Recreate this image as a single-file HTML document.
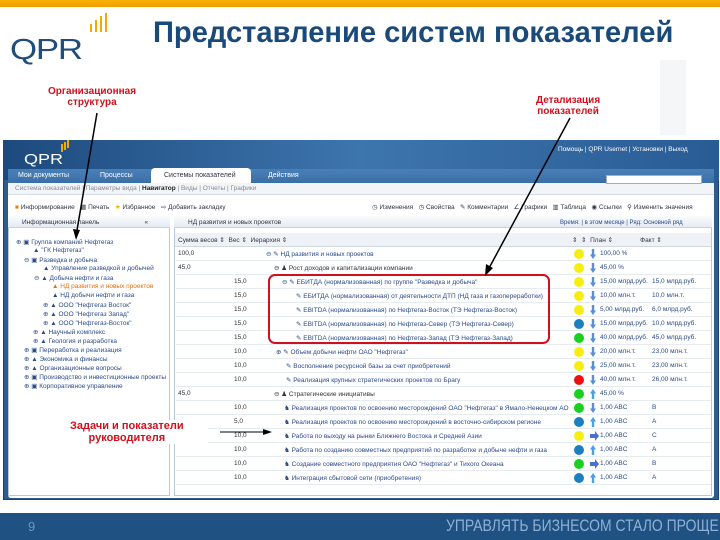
<!DOCTYPE html>
<html><head><meta charset="utf-8"><style>
*{margin:0;padding:0;box-sizing:border-box}
body{width:720px;height:540px;position:relative;overflow:hidden;background:#fff;font-family:"Liberation Sans","DejaVu Sans",sans-serif}
.a{position:absolute;white-space:nowrap}
.t{font-size:7px;color:#334}
.row{position:absolute;left:176px;width:535px;height:14px;border-bottom:1px solid #e6ebf0;font-size:6.5px;color:#2a4a8a}
.row span{position:absolute;top:3px;white-space:nowrap}
.c{position:absolute;top:2px;left:398px;width:10px;height:10px;border-radius:50%}
.ar{position:absolute;top:2px;left:414px;width:6px;height:10px;background:#5b8fd0;clip-path:polygon(30% 0,70% 0,70% 55%,100% 55%,50% 100%,0 55%,30% 55%)}
.tr{position:absolute;font-size:6.5px;color:#2a4a8a;white-space:nowrap}
</style></head><body>
<div class="a" style="left:0;top:0;width:720px;height:7px;background:linear-gradient(#f7b300,#f49a00)"></div>
<!-- logo -->
<div class="a" style="left:10px;top:34px;font-size:29px;color:#1f4e7a;letter-spacing:-1px;transform:scaleX(1.2);transform-origin:left">QPR</div>
<div class="a" style="left:90px;top:24px;width:2px;height:8px;background:#f2a900"></div>
<div class="a" style="left:95px;top:20px;width:2px;height:12px;background:#f2a900"></div>
<div class="a" style="left:100px;top:16px;width:2px;height:16px;background:#f2a900"></div>
<div class="a" style="left:105px;top:13px;width:2px;height:19px;background:#f2a900"></div>
<div class="a" style="left:153px;top:16px;font-size:30px;font-weight:bold;color:#1a4a7a;transform:scaleX(0.97);transform-origin:left">Представление систем показателей</div>
<div class="a" style="left:660px;top:60px;width:26px;height:75px;background:#f5f6f8"></div>
<div class="a" style="left:48px;top:86px;font-size:10px;font-weight:bold;color:#d0101c;text-align:center;line-height:11px">Организационная<br>структура</div>
<div class="a" style="left:536px;top:95px;font-size:10px;font-weight:bold;color:#d0101c;text-align:center;line-height:11px">Детализация<br>показателей</div>

<!-- app -->
<div class="a" style="left:3px;top:140px;width:716px;height:360px;background:#2d5d90;border:1px solid #1d4470"></div>
<div class="a" style="left:3px;top:140px;width:716px;height:40px;background:linear-gradient(90deg,#1d4a7e,#3d75ad 50%,#2a5c94)"></div>
<div class="a" style="left:24px;top:151px;font-size:15px;color:#fff;transform:scaleX(1.2);transform-origin:left">QPR</div>
<div class="a" style="left:61px;top:144px;width:2px;height:8px;background:#f2a900;box-shadow:3px -2px 0 #f2a900,6px -4px 0 #f2a900"></div>
<div class="a t" style="left:558px;top:146px;color:#fff;font-size:6.5px">Помощь | QPR Usernet | Установки | Выход</div>
<div class="a" style="left:8px;top:172px;width:706px;height:326px;background:#fff;border-radius:3px"></div>
<div class="a" style="left:8px;top:169px;width:706px;height:14px;background:linear-gradient(#4a80b8,#3a6ea6)"></div>
<div class="a t" style="left:18px;top:172px;color:#fff">Мои документы</div>
<div class="a t" style="left:100px;top:172px;color:#fff">Процессы</div>
<div class="a" style="left:151px;top:168px;width:100px;height:15px;background:#fff;border-radius:4px 4px 0 0"></div>
<div class="a t" style="left:164px;top:172px">Системы показателей</div>
<div class="a t" style="left:268px;top:172px;color:#fff">Действия</div>
<div class="a" style="left:8px;top:183px;width:706px;height:12px;background:#f2f5f8;border-bottom:1px solid #d5dde6"></div>
<div class="a t" style="left:15px;top:185px;color:#889;font-size:6.5px">Система показателей | Параметры вида | <b style="color:#222">Навигатор</b> | Виды | Отчеты | Графики</div>
<div class="a" style="left:606px;top:175px;width:96px;height:9px;background:#fff;border:1px solid #aab"></div>
<div class="a t" style="left:15px;top:203px;font-size:6.5px"><span style="color:#e08a1c">■</span> Информирование &nbsp; ▦ Печать &nbsp; <span style="color:#e8b800">★</span> Избранное &nbsp; ⇨ Добавить закладку</div>
<div class="a t" style="left:372px;top:203px;font-size:6.5px">◷ Изменения &nbsp; ◷ Свойства &nbsp; ✎ Комментарии &nbsp; ∠ Графики &nbsp; ▥ Таблица &nbsp; ◉ Ссылки &nbsp; ⚲ Изменить значения</div>
<!-- panels -->
<div class="a" style="left:8px;top:216px;width:162px;height:280px;border:1px solid #b8c8d8;background:#fff"></div>
<div class="a" style="left:8px;top:216px;width:162px;height:12px;background:linear-gradient(#fafcfe,#e4ebf3);border-bottom:1px solid #c5d1de"></div>
<div class="a t" style="left:22px;top:219px;font-size:6.5px">Информационная панель &nbsp; &nbsp; &nbsp; &nbsp; &nbsp; &nbsp; &nbsp; &nbsp; &nbsp; &nbsp; &nbsp; &nbsp; «</div>
<div class="a" style="left:174px;top:216px;width:538px;height:280px;border:1px solid #b8c8d8;background:#fff"></div>
<div class="a" style="left:174px;top:216px;width:538px;height:12px;background:linear-gradient(#fafcfe,#e4ebf3);border-bottom:1px solid #c5d1de"></div>
<div class="a t" style="left:188px;top:219px;font-size:6.5px">НД развития и новых проектов</div>
<div class="a t" style="left:560px;top:220px;font-size:6px;color:#2a4a8a">Время: | в этом месяце | Ряд: Основной ряд</div>
<div class="a" style="left:175px;top:233px;width:536px;height:14px;background:#eef2f6;border-bottom:1px solid #d0d8e0"></div>
<div class="a t" style="left:178px;top:236px;font-size:6.5px">Сумма весов ⇕ &nbsp;Вес ⇕ &nbsp;Иерархия ⇕</div>
<div class="a t" style="left:572px;top:236px;font-size:6.5px">⇕ &nbsp;⇕ &nbsp;План ⇕ &nbsp; &nbsp; &nbsp; &nbsp; &nbsp; &nbsp; &nbsp; Факт ⇕</div>
<!-- tree -->
<div class="tr" style="left:16px;top:238px">⊕ <b>▣</b> Группа компаний Нефтегаз</div>
<div class="tr" style="left:33px;top:247px">▲ "ГК Нефтегаз"</div>
<div class="tr" style="left:24px;top:256px">⊖ ▣ Разведка и добыча</div>
<div class="tr" style="left:43px;top:265px">▲ Управление разведкой и добычей</div>
<div class="tr" style="left:34px;top:274px">⊖ ▲ Добыча нефти и газа</div>
<div class="tr" style="left:52px;top:283px;color:#e07010">▲ НД развития и новых проектов</div>
<div class="tr" style="left:52px;top:292px">▲ НД добычи нефти и газа</div>
<div class="tr" style="left:43px;top:301px">⊕ ▲ ООО "Нефтегаз Восток"</div>
<div class="tr" style="left:43px;top:310px">⊕ ▲ ООО "Нефтегаз Запад"</div>
<div class="tr" style="left:43px;top:319px">⊕ ▲ ООО "Нефтегаз-Восток"</div>
<div class="tr" style="left:33px;top:328px">⊕ ▲ Научный комплекс</div>
<div class="tr" style="left:33px;top:337px">⊕ ▲ Геология и разработка</div>
<div class="tr" style="left:24px;top:346px">⊕ ▣ Переработка и реализация</div>
<div class="tr" style="left:24px;top:355px">⊕ ▲ Экономика и финансы</div>
<div class="tr" style="left:24px;top:364px">⊕ ▲ Организационные вопросы</div>
<div class="tr" style="left:24px;top:373px">⊕ ▣ Производство и инвестиционные проекты</div>
<div class="tr" style="left:24px;top:382px">⊕ ▣ Корпоративное управление</div>
<!-- rows -->
<div class="row" style="top:247px"><span style="left:2px;color:#333">100,0</span><span style="left:90px">⊖ ✎ НД развития и новых проектов</span><i class="c" style="background:#f5ee10"></i><i class="ar"></i><span style="left:424px">100,00 %</span></div>
<div class="row" style="top:261px"><span style="left:2px;color:#333">45,0</span><span style="left:98px;color:#333">⊖ <b>♟</b> Рост доходов и капитализации компании</span><i class="c" style="background:#f5ee10"></i><i class="ar"></i><span style="left:424px">45,00 %</span></div>
<div class="row" style="top:275px"><span style="left:58px;color:#333">15,0</span><span style="left:106px">⊖ ✎ ЕБИТДА (нормализованная) по группе "Разведка и добыча"</span><i class="c" style="background:#f5ee10"></i><i class="ar"></i><span style="left:424px">15,00 млрд.руб.</span><span style="left:476px">15,0 млрд.руб.</span></div>
<div class="row" style="top:289px"><span style="left:58px;color:#333">15,0</span><span style="left:120px">✎ ЕБИТДА (нормализованная) от деятельности ДТП (НД газа и газопереработки)</span><i class="c" style="background:#f5ee10"></i><i class="ar"></i><span style="left:424px">10,00 млн.т.</span><span style="left:476px">10,0 млн.т.</span></div>
<div class="row" style="top:303px"><span style="left:58px;color:#333">15,0</span><span style="left:120px">✎ EBITDA (нормализованная) по Нефтегаз-Восток (ТЭ Нефтегаз-Восток)</span><i class="c" style="background:#f5ee10"></i><i class="ar"></i><span style="left:424px">5,00 млрд.руб.</span><span style="left:476px">6,0 млрд.руб.</span></div>
<div class="row" style="top:317px"><span style="left:58px;color:#333">15,0</span><span style="left:120px">✎ EBITDA (нормализованная) по Нефтегаз-Север (ТЭ Нефтегаз-Север)</span><i class="c" style="background:#1b7fc0"></i><i class="ar"></i><span style="left:424px">15,00 млрд.руб.</span><span style="left:476px">10,0 млрд.руб.</span></div>
<div class="row" style="top:331px"><span style="left:58px;color:#333">15,0</span><span style="left:120px">✎ EBITDA (нормализованная) по Нефтегаз-Запад (ТЭ Нефтегаз-Запад)</span><i class="c" style="background:#18d020"></i><i class="ar"></i><span style="left:424px">40,00 млрд.руб.</span><span style="left:476px">45,0 млрд.руб.</span></div>
<div class="row" style="top:345px"><span style="left:58px;color:#333">10,0</span><span style="left:100px">⊕ ✎ Объем добычи нефти ОАО "Нефтегаз"</span><i class="c" style="background:#f5ee10"></i><i class="ar"></i><span style="left:424px">20,00 млн.т.</span><span style="left:476px">23,00 млн.т.</span></div>
<div class="row" style="top:359px"><span style="left:58px;color:#333">10,0</span><span style="left:110px">✎ Восполнение ресурсной базы за счет приобретений</span><i class="c" style="background:#f5ee10"></i><i class="ar"></i><span style="left:424px">25,00 млн.т.</span><span style="left:476px">23,00 млн.т.</span></div>
<div class="row" style="top:373px"><span style="left:58px;color:#333">10,0</span><span style="left:110px">✎ Реализация крупных стратегических проектов по Брагу</span><i class="c" style="background:#ee1010"></i><i class="ar"></i><span style="left:424px">40,00 млн.т.</span><span style="left:476px">26,00 млн.т.</span></div>
<div class="row" style="top:387px"><span style="left:2px;color:#333">45,0</span><span style="left:98px;color:#333">⊖ <b>♟</b> Стратегические инициативы</span><i class="c" style="background:#18d020"></i><i class="ar" style="background:#4aa0e0;transform:rotate(180deg)"></i><span style="left:424px">45,00 %</span></div>
<div class="row" style="top:401px"><span style="left:58px;color:#333">10,0</span><span style="left:108px">♞ Реализация проектов по освоению месторождений ОАО "Нефтегаз" в Ямало-Ненецком АО</span><i class="c" style="background:#18d020"></i><i class="ar"></i><span style="left:424px">1,00 ABC</span><span style="left:476px">B</span></div>
<div class="row" style="top:415px"><span style="left:58px;color:#333">5,0</span><span style="left:108px">♞ Реализация проектов по освоению месторождений в восточно-сибирском регионе</span><i class="c" style="background:#1b7fc0"></i><i class="ar" style="background:#4aa0e0;transform:rotate(180deg)"></i><span style="left:424px">1,00 ABC</span><span style="left:476px">A</span></div>
<div class="row" style="top:429px"><span style="left:58px;color:#333">10,0</span><span style="left:108px">♞ Работа по выходу на рынки Ближнего Востока и Средней Азии</span><i class="c" style="background:#f5ee10"></i><i class="ar" style="background:#4a70d0;clip-path:polygon(0 30%,55% 30%,55% 0,100% 50%,55% 100%,55% 70%,0 70%);width:9px"></i><span style="left:424px">1,00 ABC</span><span style="left:476px">C</span></div>
<div class="row" style="top:443px"><span style="left:58px;color:#333">10,0</span><span style="left:108px">♞ Работа по созданию совместных предприятий по разработке и добыче нефти и газа</span><i class="c" style="background:#1b7fc0"></i><i class="ar" style="background:#4aa0e0;transform:rotate(180deg)"></i><span style="left:424px">1,00 ABC</span><span style="left:476px">A</span></div>
<div class="row" style="top:457px"><span style="left:58px;color:#333">10,0</span><span style="left:108px">♞ Создание совместного предприятия ОАО "Нефтегаз" и Тихого Океана</span><i class="c" style="background:#18d020"></i><i class="ar" style="background:#4a70d0;clip-path:polygon(0 30%,55% 30%,55% 0,100% 50%,55% 100%,55% 70%,0 70%);width:9px"></i><span style="left:424px">1,00 ABC</span><span style="left:476px">B</span></div>
<div class="row" style="top:471px"><span style="left:58px;color:#333">10,0</span><span style="left:108px">♞ Интеграция сбытовой сети (приобретения)</span><i class="c" style="background:#1b7fc0"></i><i class="ar" style="background:#4aa0e0;transform:rotate(180deg)"></i><span style="left:424px">1,00 ABC</span><span style="left:476px">A</span></div>
<!-- red box -->
<div class="a" style="left:268px;top:274px;width:282px;height:70px;border:2px solid #d0101c;border-radius:7px"></div>
<!-- label -->
<div class="a" style="left:48px;top:420px;width:160px;height:24px;background:#fff"></div>
<div class="a" style="left:70px;top:420px;font-size:11px;font-weight:bold;color:#d0101c;text-align:center;line-height:12px">Задачи и показатели<br>руководителя</div>
<!-- arrows -->
<svg class="a" style="left:0;top:0" width="720" height="540">
<line x1="97" y1="113" x2="76" y2="236" stroke="#000" stroke-width="1.5"/>
<polygon points="76,240 73,229 80,230" fill="#000"/>
<line x1="570" y1="118" x2="488" y2="270" stroke="#000" stroke-width="1.5"/>
<polygon points="485,276 486,264 493,268" fill="#000"/>
<line x1="220" y1="432" x2="265" y2="432" stroke="#000" stroke-width="1"/>
<polygon points="272,432 263,429 263,435" fill="#000"/>
</svg>
<!-- footer -->
<div class="a" style="left:0;top:513px;width:720px;height:27px;background:#1f5283"></div>
<div class="a" style="left:28px;top:519px;font-size:13px;color:#6d96c0">9</div>
<div class="a" style="left:446px;top:516px;font-size:17px;color:#8fb0d3;transform:scaleX(0.82);transform-origin:left">УПРАВЛЯТЬ БИЗНЕСОМ СТАЛО ПРОЩЕ</div>
</body></html>
